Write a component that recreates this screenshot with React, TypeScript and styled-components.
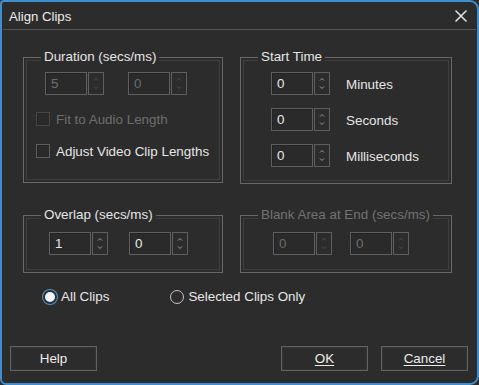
import React from "react";
import styled, { createGlobalStyle } from "styled-components";

const Global = createGlobalStyle`
  html, body { margin: 0; padding: 0; background: #2c2c2c; }
  body { font-family: "Liberation Sans", Arial, sans-serif; font-size: 13.4px; color: #e6e6e6; }
  * { box-sizing: border-box; }
`;

const BG = "#2c2c2c";
const FS = "13.4px";

const Window = styled.div`
  width: 479px;
  height: 385px;
  border: 2px solid #3d8fd2;
  border-radius: 4px 9px 9px 6px;
  background: ${BG};
  display: flex;
  flex-direction: column;
  overflow: hidden;
`;

const TitleBar = styled.div`
  height: 28px;
  flex: none;
  display: flex;
  align-items: center;
  justify-content: space-between;
  padding: 1px 9px 0 6px;
  border-bottom: 1px solid #565656;
  margin: 0 1px;
`;

const Title = styled.span`
  font-size: 13.2px;
  color: #ececec;
`;

const Body = styled.div`
  flex: 1;
  display: flex;
  flex-direction: column;
  padding: 19px 9px 12px 8px;
`;

const GroupRow = styled.div<{ $mt?: number }>`
  display: grid;
  grid-template-columns: 200px 212px;
  column-gap: 17px;
  padding-left: 13px;
  margin-top: ${(p) => p.$mt ?? 0}px;
`;

const Group = styled.fieldset<{ $h: number }>`
  margin: 0;
  padding: 0;
  min-width: 0;
  height: ${(p) => p.$h}px;
  border: 1px solid #686868;
  box-shadow: inset 0 0 0 2px ${BG}, inset 0 0 0 3px #3f3f3f;
`;

const Legend = styled.legend<{ $disabled?: boolean }>`
  margin-left: 17px;
  padding: 0 3px;
  line-height: 16px;
  font-size: ${FS};
  background: ${BG};
  position: relative;
  color: ${(p) => (p.$disabled ? "#727272" : "#e6e6e6")};
`;

const GroupInner = styled.div<{ $pt: number; $pl: number; $gap: number }>`
  display: flex;
  flex-direction: column;
  padding: ${(p) => p.$pt}px 0 0 ${(p) => p.$pl}px;
  gap: ${(p) => p.$gap}px;
`;

const SpinRow = styled.div<{ $gap: number; $ml?: number }>`
  display: flex;
  align-items: center;
  gap: ${(p) => p.$gap}px;
  margin-left: ${(p) => p.$ml ?? 0}px;
`;

const SpinWrap = styled.div`
  display: flex;
  gap: 1px;
  height: 23px;
`;

const SpinInput = styled.div<{ $disabled?: boolean }>`
  width: 42px;
  height: 100%;
  border: 1px solid #5f5f5f;
  box-shadow: inset 1px 1px 0 #232323;
  background: #2a2a2a;
  padding-left: 5px;
  display: flex;
  align-items: center;
  font-size: ${FS};
  color: ${(p) => (p.$disabled ? "#6c6c6c" : "#e8e8e8")};
`;

const SpinButtons = styled.div<{ $disabled?: boolean }>`
  width: 16px;
  height: 100%;
  border: 1px solid #5f5f5f;
  background: #2c2c2c;
  display: flex;
  align-items: center;
  justify-content: center;
  color: ${(p) => (p.$disabled ? "#4e4e4e" : "#9a9a9a")};
`;

const Arrows = () => (
  <svg width="8" height="15" viewBox="0 0 8 15" fill="none" stroke="currentColor" strokeWidth="1">
    <path d="M2 4.5 L4 2.5 L6 4.5" />
    <path d="M2 10.5 L4 12.5 L6 10.5" />
  </svg>
);

const Spinner = ({ value, disabled }: { value: string; disabled?: boolean }) => (
  <SpinWrap>
    <SpinInput $disabled={disabled}>{value}</SpinInput>
    <SpinButtons $disabled={disabled}>
      <Arrows />
    </SpinButtons>
  </SpinWrap>
);

const TimeRow = styled.div`
  display: flex;
  align-items: center;
  gap: 16px;
`;

const Label = styled.span`
  font-size: ${FS};
  color: #e6e6e6;
  padding-top: 2px;
`;

const CheckRow = styled.label<{ $disabled?: boolean }>`
  display: flex;
  align-items: center;
  gap: 6px;
  height: 16px;
  font-size: ${FS};
  color: ${(p) => (p.$disabled ? "#6e6e6e" : "#e6e6e6")};
`;

const CheckBox = styled.span<{ $disabled?: boolean }>`
  width: 14px;
  height: 14px;
  border: 1px solid ${(p) => (p.$disabled ? "#474747" : "#5f5f5f")};
  background: #2a2a2a;
  box-shadow: inset 1px 1px 0 #242424;
`;

const RadioRow = styled.div`
  display: flex;
  align-items: center;
  gap: 61px;
  margin-top: 16px;
  padding-left: 33px;
`;

const RadioItem = styled.label`
  display: flex;
  align-items: center;
  gap: 4px;
  font-size: ${FS};
  color: #e6e6e6;
`;

const RadioDot = styled.span<{ $on?: boolean }>`
  width: 14px;
  height: 14px;
  border-radius: 50%;
  ${(p) =>
    p.$on
      ? `background: #f4f4f4; border: 2px solid #1b3448; box-shadow: 0 0 0 1px #6c8ba6;`
      : `background: transparent; border: 1.5px solid #c4c4c4;`}
`;

const ButtonRow = styled.div`
  margin-top: auto;
  display: flex;
  align-items: center;
  gap: 13px;
`;

const Button = styled.button<{ $push?: boolean }>`
  width: 87px;
  height: 25px;
  margin-left: ${(p) => (p.$push ? "auto" : "0")};
  border: 1px solid #626262;
  box-shadow: inset 0 0 0 1px #343434;
  background: #2c2c2c;
  color: #ececec;
  font-family: "Liberation Sans", Arial, sans-serif;
  font-size: ${FS};
  padding: 0;
`;

const Mnemonic = styled.span`
  text-decoration: underline;
  text-underline-offset: 2px;
`;

const CloseIcon = () => (
  <svg width="12" height="12" viewBox="0 0 12 12" stroke="#e0e0e0" strokeWidth="1.6" strokeLinecap="round">
    <path d="M1 1 L11 11 M11 1 L1 11" />
  </svg>
);

export default function App() {
  return (
    <>
      <Global />
      <Window>
        <TitleBar>
          <Title>Align Clips</Title>
          <CloseIcon />
        </TitleBar>
        <Body>
          <GroupRow>
            <Group $h={134}>
              <Legend>Duration (secs/ms)</Legend>
              <GroupInner $pt={7} $pl={12} $gap={16}>
                <SpinRow $gap={24} $ml={9}>
                  <Spinner value="5" disabled />
                  <Spinner value="0" disabled />
                </SpinRow>
                <CheckRow $disabled>
                  <CheckBox $disabled />
                  Fit to Audio Length
                </CheckRow>
                <CheckRow>
                  <CheckBox />
                  Adjust Video Clip Lengths
                </CheckRow>
              </GroupInner>
            </Group>
            <Group $h={135}>
              <Legend>Start Time</Legend>
              <GroupInner $pt={7} $pl={30} $gap={13}>
                <TimeRow>
                  <Spinner value="0" />
                  <Label>Minutes</Label>
                </TimeRow>
                <TimeRow>
                  <Spinner value="0" />
                  <Label>Seconds</Label>
                </TimeRow>
                <TimeRow>
                  <Spinner value="0" />
                  <Label>Milliseconds</Label>
                </TimeRow>
              </GroupInner>
            </Group>
          </GroupRow>
          <GroupRow $mt={23}>
            <Group $h={66}>
              <Legend>Overlap (secs/ms)</Legend>
              <GroupInner $pt={9} $pl={25} $gap={0}>
                <SpinRow $gap={21}>
                  <Spinner value="1" />
                  <Spinner value="0" />
                </SpinRow>
              </GroupInner>
            </Group>
            <Group $h={66}>
              <Legend $disabled>Blank Area at End (secs/ms)</Legend>
              <GroupInner $pt={9} $pl={32} $gap={0}>
                <SpinRow $gap={18}>
                  <Spinner value="0" disabled />
                  <Spinner value="0" disabled />
                </SpinRow>
              </GroupInner>
            </Group>
          </GroupRow>
          <RadioRow>
            <RadioItem>
              <RadioDot $on />
              All Clips
            </RadioItem>
            <RadioItem>
              <RadioDot />
              Selected Clips Only
            </RadioItem>
          </RadioRow>
          <ButtonRow>
            <Button>Help</Button>
            <Button $push>
              <Mnemonic>OK</Mnemonic>
            </Button>
            <Button>
              <Mnemonic>Cancel</Mnemonic>
            </Button>
          </ButtonRow>
        </Body>
      </Window>
    </>
  );
}
